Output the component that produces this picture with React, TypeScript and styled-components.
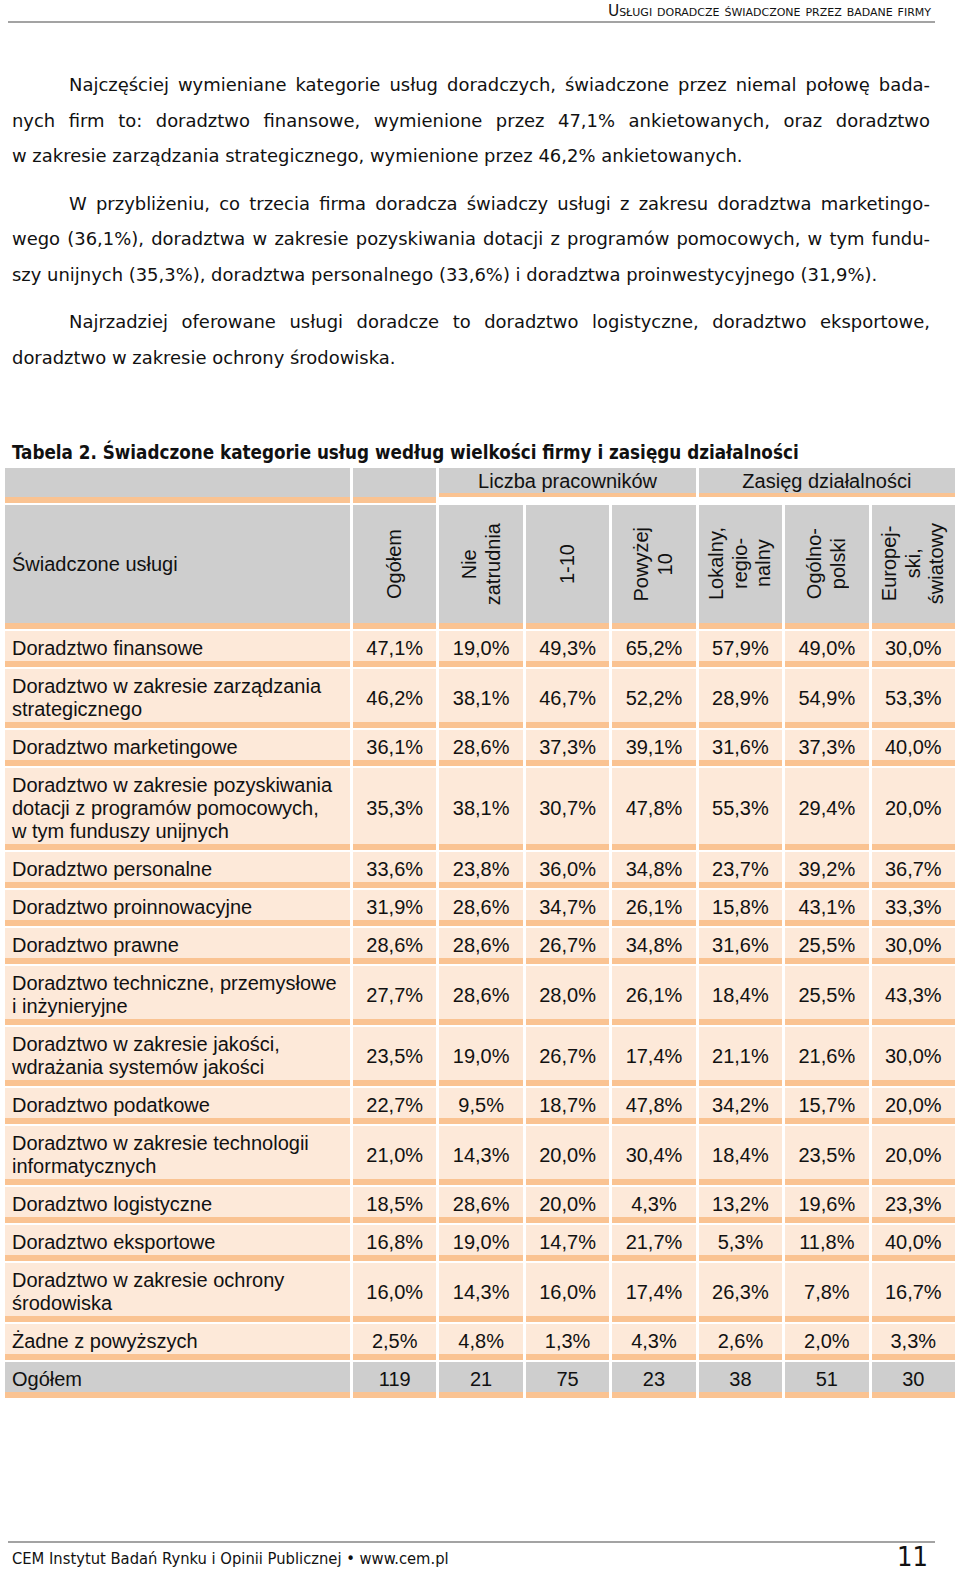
import React from "react";
import styled, { createGlobalStyle } from "styled-components";

const GlobalStyle = createGlobalStyle`
  html, body { margin: 0; padding: 0; background: #ffffff; }
  body { font-family: "Liberation Sans", Arial, sans-serif; color: #000; }
`;

const GRAY = "#cecece";
const ORANGE = "#fac392";
const CREAM = "#fde9d9";

const Page = styled.div`
  width: 960px;
  min-height: 1571px;
  display: flex;
  flex-direction: column;
  box-sizing: border-box;
`;

const RunningHead = styled.div`
  padding: 2px 29px 0 0;
  text-align: right;
  font-family: "DejaVu Sans", sans-serif;
  font-variant: small-caps;
  font-size: 15.4px;
  line-height: 19px;
  color: #111;
`;

const Rule = styled.div`
  margin: 0 25px 0 8px;
  height: 2px;
  background: #a3a3a3;
`;

const TextBlock = styled.div`
  margin: 44px 30px 0 12px;
  font-family: "DejaVu Sans", sans-serif;
  font-size: 17.95px;
  line-height: 35.5px;
  color: #111;
`;

const Paragraph = styled.p`
  margin: 0 0 12px 0;
`;

const Line = styled.span<{ $last?: boolean; $indent?: boolean }>`
  display: block;
  white-space: nowrap;
  padding-left: ${(p) => (p.$indent ? 57 : 0)}px;
  text-align: ${(p) => (p.$last ? "left" : "justify")};
  text-align-last: ${(p) => (p.$last ? "left" : "justify")};
`;

const Caption = styled.div`
  margin: 55px 0 4px 12px;
  font-family: "DejaVu Sans Condensed", "DejaVu Sans", sans-serif;
  font-stretch: condensed;
  font-weight: bold;
  font-size: 18.7px;
  line-height: 22px;
  color: #111;
`;

const Table = styled.div`
  margin: 0 5px;
  width: 950px;
  display: grid;
  grid-template-columns: 345px repeat(7, 1fr);
  column-gap: 3px;
  row-gap: 2px;
  font-family: "Liberation Sans", Arial, sans-serif;
  font-size: 20px;
  color: #111;
`;

const HeadBlank = styled.div`
  height: 29px;
  background: ${GRAY};
  border-bottom: 6px solid ${ORANGE};
`;

const GroupHead = styled.div`
  grid-column: span 3;
  height: 29px;
  background: ${GRAY};
  border-bottom: 4px solid ${ORANGE};
  display: flex;
  align-items: center;
  justify-content: center;
  padding-top: 2px;
  box-sizing: border-box;
  line-height: 23px;
`;

const HeadCell = styled.div<{ $left?: boolean }>`
  height: 118px;
  background: ${GRAY};
  border-bottom: 6px solid ${ORANGE};
  display: flex;
  align-items: center;
  justify-content: ${(p) => (p.$left ? "flex-start" : "center")};
  padding-left: ${(p) => (p.$left ? 7 : 0)}px;
  line-height: 23px;
`;

const VerticalLabel = styled.span`
  writing-mode: vertical-rl;
  transform: rotate(180deg);
  text-align: center;
  line-height: 23.5px;
  white-space: pre-line;
`;

const LabelCell = styled.div<{ $total?: boolean }>`
  background: ${(p) => (p.$total ? GRAY : CREAM)};
  border-bottom: 6px solid ${ORANGE};
  padding: 6px 8px 1px 7px;
  line-height: 23px;
  min-height: 23px;
`;

const ValueCell = styled.div<{ $total?: boolean }>`
  background: ${(p) => (p.$total ? GRAY : CREAM)};
  border-bottom: 6px solid ${ORANGE};
  padding-top: 5px;
  display: flex;
  align-items: center;
  justify-content: center;
  line-height: 23px;
`;

const Footer = styled.footer`
  margin-top: auto;
`;

const FooterRow = styled.div`
  display: flex;
  justify-content: space-between;
  align-items: flex-end;
  padding: 0 32px 2px 12px;
  height: 26px;
`;

const FooterText = styled.span`
  font-family: "Liberation Sans Narrow", "DejaVu Sans Condensed", "DejaVu Sans", sans-serif;
  font-stretch: condensed;
  font-size: 16.4px;
  line-height: 20px;
  color: #111;
`;

const PageNumber = styled.span`
  font-family: "Liberation Sans Narrow", "DejaVu Sans Condensed", "DejaVu Sans", sans-serif;
  font-stretch: condensed;
  font-size: 27px;
  line-height: 24px;
  color: #111;
`;

type Row = { label: string; values: string[]; total?: boolean };

const rows: Row[] = [
  { label: "Doradztwo finansowe", values: ["47,1%", "19,0%", "49,3%", "65,2%", "57,9%", "49,0%", "30,0%"] },
  { label: "Doradztwo w zakresie zarządzania\nstrategicznego", values: ["46,2%", "38,1%", "46,7%", "52,2%", "28,9%", "54,9%", "53,3%"] },
  { label: "Doradztwo marketingowe", values: ["36,1%", "28,6%", "37,3%", "39,1%", "31,6%", "37,3%", "40,0%"] },
  { label: "Doradztwo w zakresie pozyskiwania\ndotacji z programów pomocowych,\nw tym funduszy unijnych", values: ["35,3%", "38,1%", "30,7%", "47,8%", "55,3%", "29,4%", "20,0%"] },
  { label: "Doradztwo personalne", values: ["33,6%", "23,8%", "36,0%", "34,8%", "23,7%", "39,2%", "36,7%"] },
  { label: "Doradztwo proinnowacyjne", values: ["31,9%", "28,6%", "34,7%", "26,1%", "15,8%", "43,1%", "33,3%"] },
  { label: "Doradztwo prawne", values: ["28,6%", "28,6%", "26,7%", "34,8%", "31,6%", "25,5%", "30,0%"] },
  { label: "Doradztwo techniczne, przemysłowe\ni inżynieryjne", values: ["27,7%", "28,6%", "28,0%", "26,1%", "18,4%", "25,5%", "43,3%"] },
  { label: "Doradztwo w zakresie jakości,\nwdrażania systemów jakości", values: ["23,5%", "19,0%", "26,7%", "17,4%", "21,1%", "21,6%", "30,0%"] },
  { label: "Doradztwo podatkowe", values: ["22,7%", "9,5%", "18,7%", "47,8%", "34,2%", "15,7%", "20,0%"] },
  { label: "Doradztwo w zakresie technologii\ninformatycznych", values: ["21,0%", "14,3%", "20,0%", "30,4%", "18,4%", "23,5%", "20,0%"] },
  { label: "Doradztwo logistyczne", values: ["18,5%", "28,6%", "20,0%", "4,3%", "13,2%", "19,6%", "23,3%"] },
  { label: "Doradztwo eksportowe", values: ["16,8%", "19,0%", "14,7%", "21,7%", "5,3%", "11,8%", "40,0%"] },
  { label: "Doradztwo w zakresie ochrony\nśrodowiska", values: ["16,0%", "14,3%", "16,0%", "17,4%", "26,3%", "7,8%", "16,7%"] },
  { label: "Żadne z powyższych", values: ["2,5%", "4,8%", "1,3%", "4,3%", "2,6%", "2,0%", "3,3%"] },
  { label: "Ogółem", values: ["119", "21", "75", "23", "38", "51", "30"], total: true },
];

const columns = [
  "Ogółem",
  "Nie\nzatrudnia",
  "1-10",
  "Powyżej\n10",
  "Lokalny,\nregio-\nnalny",
  "Ogólno-\npolski",
  "Europej-\nski,\nświatowy",
];

const paragraphs: string[][] = [
  [
    "Najczęściej wymieniane kategorie usług doradczych, świadczone przez niemal połowę bada-",
    "nych firm to: doradztwo finansowe, wymienione przez 47,1% ankietowanych, oraz doradztwo",
    "w zakresie zarządzania strategicznego, wymienione przez 46,2% ankietowanych.",
  ],
  [
    "W przybliżeniu, co trzecia firma doradcza świadczy usługi z zakresu doradztwa marketingo-",
    "wego (36,1%), doradztwa w zakresie pozyskiwania dotacji z programów pomocowych, w tym fundu-",
    "szy unijnych (35,3%), doradztwa personalnego (33,6%) i doradztwa proinwestycyjnego (31,9%).",
  ],
  [
    "Najrzadziej oferowane usługi doradcze to doradztwo logistyczne, doradztwo eksportowe,",
    "doradztwo w zakresie ochrony środowiska.",
  ],
];

function Multiline({ text }: { text: string }) {
  const parts = text.split("\n");
  return (
    <>
      {parts.map((p, i) => (
        <React.Fragment key={i}>
          {p}
          {i < parts.length - 1 && <br />}
        </React.Fragment>
      ))}
    </>
  );
}

export default function App() {
  return (
    <Page>
      <GlobalStyle />
      <RunningHead>Usługi doradcze świadczone przez badane firmy</RunningHead>
      <Rule />

      <TextBlock>
        {paragraphs.map((lines, pi) => (
          <Paragraph key={pi}>
            {lines.map((l, li) => (
              <Line key={li} $indent={li === 0} $last={li === lines.length - 1}>
                {l}
              </Line>
            ))}
          </Paragraph>
        ))}
      </TextBlock>

      <Caption>
        Tabela 2. Świadczone kategorie usług według wielkości firmy i zasięgu działalności
      </Caption>

      <Table>
        <HeadBlank />
        <HeadBlank />
        <GroupHead>Liczba pracowników</GroupHead>
        <GroupHead>Zasięg działalności</GroupHead>

        <HeadCell $left>Świadczone usługi</HeadCell>
        {columns.map((c) => (
          <HeadCell key={c}>
            <VerticalLabel>{c}</VerticalLabel>
          </HeadCell>
        ))}

        {rows.map((r) => (
          <React.Fragment key={r.label}>
            <LabelCell $total={r.total}>
              <Multiline text={r.label} />
            </LabelCell>
            {r.values.map((v, i) => (
              <ValueCell key={i} $total={r.total}>
                {v}
              </ValueCell>
            ))}
          </React.Fragment>
        ))}
      </Table>

      <Footer>
        <Rule />
        <FooterRow>
          <FooterText>CEM Instytut Badań Rynku i Opinii Publicznej • www.cem.pl</FooterText>
          <PageNumber>11</PageNumber>
        </FooterRow>
      </Footer>
    </Page>
  );
}
